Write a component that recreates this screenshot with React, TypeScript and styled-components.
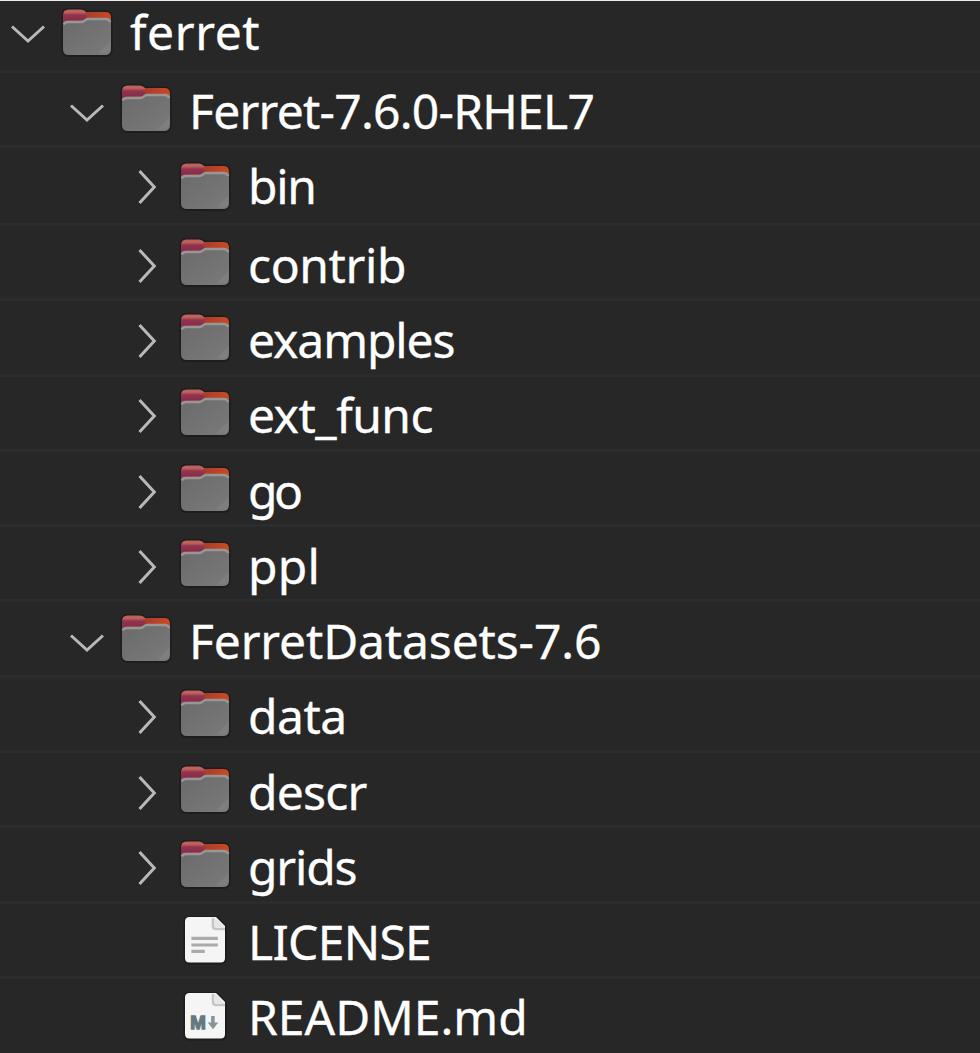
import React from 'react';
import styled, { createGlobalStyle } from 'styled-components';

const GlobalStyle = createGlobalStyle`
  body { margin: 0; background: #272727; }
`;

const Tree = styled.ul`
  margin: 0;
  padding: 0;
  list-style: none;
  height: 1053px;
  box-sizing: border-box;
  overflow: hidden;
  background: #272727;
  border-top: 1px solid #ececec;
`;

const Row = styled.li<{ $h: number; $level: number }>`
  display: flex;
  align-items: flex-start;
  box-sizing: border-box;
  height: ${p => p.$h}px;
  padding-left: ${p => p.$level * 59}px;
  border-bottom: 3px solid #2c2c2c;
`;

const Slot = styled.span<{ $w: number; $top: number }>`
  display: block;
  flex: none;
  width: ${p => p.$w}px;
  margin-top: ${p => p.$top}px;
  svg { display: block; }
`;

const Label = styled.span<{ $top: number; $ls: number }>`
  margin-top: ${p => p.$top}px;
  font: 400 48px/60px 'Noto Sans', sans-serif;
  letter-spacing: ${p => p.$ls}px;
  color: #fff;
  -webkit-text-stroke: 0.3px #fff;
  white-space: pre;
`;

function Chevron({ open }: { open?: boolean }) {
  return (
    <svg width="48" height="40" viewBox="0 0 48 40" fill="none" stroke="#b9b9b9" strokeWidth="3">
      <path d={open ? 'M12 12.5 28 27 44 12.5' : 'M21.500 3 36.300 19 21.500 35'} />
    </svg>
  );
}

function Folder() {
  return (
    <svg width="56" height="52" viewBox="0 0 56 52">
      <defs>
        <linearGradient id="back" x1="0" x2="1"><stop stopColor="#8e2c4c" /><stop offset=".5" stopColor="#a93d2c" /><stop offset="1" stopColor="#cb4a22" /></linearGradient>
        <linearGradient id="tab" gradientUnits="userSpaceOnUse" x1="0" x2="0" y1="3.5" y2="15"><stop stopColor="#b8605a" /><stop offset=".22" stopColor="#c0655d" /><stop offset=".48" stopColor="#92344f" /><stop offset="1" stopColor="#852b4a" /></linearGradient>
        <linearGradient id="face" x1="0" x2="1" y1="0" y2="1"><stop stopColor="#6a6a6a" /><stop offset="1" stopColor="#7a7a7a" /></linearGradient>
      </defs>
      <path d="M2.500 10q0-8 7-8h13q3 0 5 2.500H46q7.500 0 7.500 7.500v31q0 8-7.500 8H10q-7.500 0-7.500-8z" fill="#1d1d1d" />
      <path d="M4 10q0-4 4-4h39q5 0 5 6v12H4z" fill="url(#back)" />
      <path d="M4 19V9.500Q4 3.500 9.500 3.500H22q3 0 5 2.500v8H4z" fill="url(#tab)" />
      <path d="M4 18.500q0-3.500 4-3.500h14q2 0 3.500-1.500t4-1.500H47q5 0 5 5v26q0 6-6 6H10q-6 0-6-6z" fill="url(#face)" />
      <path d="M4.800 18.500q1-2.500 4-2.500h13.500q2 0 3.500-1.500t3.500-1.500H47q3 0 4.200 3" fill="none" stroke="#979797" strokeWidth="2.400" />
      <path d="M39 47.500 51.500 35v7q0 5.500-5.500 5.500z" fill="#858585" opacity=".5" />
    </svg>
  );
}

const MarkLetter = styled.text`
  font: 700 18px 'Liberation Sans', sans-serif;
  fill: #667980;
  stroke: #667980;
  stroke-width: 1.3px;
`;

function Document({ kind }: { kind: 'text' | 'markdown' }) {
  return (
    <svg width="56" height="52" viewBox="0 0 56 52">
      <path d="M6.500 8q0-6 6-6h27.500L50 12v32q0 6.500-6 6.500H12.500q-6 0-6-6z" fill="#1d1d1d" />
      <path d="M8 7.500q0-4.500 4.500-4.500h26.500l9 9v32q0 4.500-4.500 4.500H12.500Q8 48.500 8 44z" fill="#f5f5f5" />
      <path d="M36 4v8q0 3 3 3h9" fill="none" stroke="#c6c6c6" strokeWidth="2.600" />
      <path d="M37.300 3.200 47.500 13.200H40q-2.700 0-2.700-2.700z" fill="#e6e6e6" />
      {kind === 'text' ? (
        <path d="M14.400 24.300h26.400M14.400 31h26.400M14.400 37.300h13.400" stroke="#ababab" strokeWidth="3.200" />
      ) : (
        <>
          <MarkLetter x="13.300" y="38.600" textLength="15.600" lengthAdjust="spacingAndGlyphs">M</MarkLetter>
          <path d="M35.900 26v8" stroke="#87959b" strokeWidth="3.600" />
          <path d="M30.700 32.500h10.600L36 39.200z" fill="#87959b" />
        </>
      )}
    </svg>
  );
}

type Item = { name: string; level: number; kind: 'open' | 'closed' | 'text' | 'markdown'; h: number; icon: number; text: number; ls: number };

const items: Item[] = [
  { name: 'ferret', level: 0, kind: 'open', h: 71.5, icon: 5, text: 1, ls: 0.6 },
  { name: 'Ferret-7.6.0-RHEL7', level: 1, kind: 'open', h: 75, icon: 9.5, text: 8.6, ls: -0.76 },
  { name: 'bin', level: 2, kind: 'closed', h: 78.5, icon: 12.5, text: 8.4, ls: -1.3 },
  { name: 'contrib', level: 2, kind: 'closed', h: 75.3, icon: 9.7, text: 8.9, ls: -0.4 },
  { name: 'examples', level: 2, kind: 'closed', h: 75.3, icon: 9.7, text: 8.9, ls: -1.1 },
  { name: 'ext_func', level: 2, kind: 'closed', h: 75.3, icon: 9.7, text: 8.9, ls: -0.5 },
  { name: 'go', level: 2, kind: 'closed', h: 75.3, icon: 9.7, text: 8.9, ls: -3.5 },
  { name: 'ppl', level: 2, kind: 'closed', h: 75.3, icon: 9.7, text: 8.9, ls: 0.2 },
  { name: 'FerretDatasets-7.6', level: 1, kind: 'open', h: 75.3, icon: 9.7, text: 8.9, ls: -0.15 },
  { name: 'data', level: 2, kind: 'closed', h: 75.3, icon: 9.7, text: 8.7, ls: -0.5 },
  { name: 'descr', level: 2, kind: 'closed', h: 75.3, icon: 9.7, text: 8.7, ls: -0.8 },
  { name: 'grids', level: 2, kind: 'closed', h: 75.3, icon: 9.7, text: 8.5, ls: -1.2 },
  { name: 'LICENSE', level: 2, kind: 'text', h: 75.3, icon: 10.7, text: 8.2, ls: -0.7 },
  { name: 'README.md', level: 2, kind: 'markdown', h: 78, icon: 10.7, text: 8, ls: 0 },
];

export default function App() {
  return (
    <>
      <GlobalStyle />
      <Tree>
        {items.map(item => (
          <Row key={item.name} $h={item.h} $level={item.level}>
            <Slot $w={59} $top={item.text + 12}>
              {(item.kind === 'open' || item.kind === 'closed') && <Chevron open={item.kind === 'open'} />}
            </Slot>
            <Slot $w={71} $top={item.icon}>
              {item.kind === 'text' || item.kind === 'markdown' ? <Document kind={item.kind} /> : <Folder />}
            </Slot>
            <Label $top={item.text} $ls={item.ls}>{item.name}</Label>
          </Row>
        ))}
      </Tree>
    </>
  );
}
